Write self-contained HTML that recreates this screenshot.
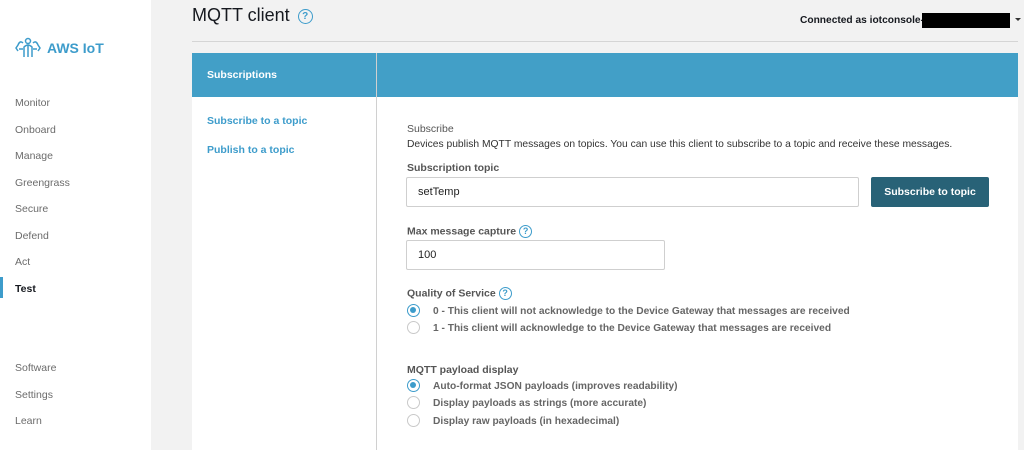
<!DOCTYPE html>
<html><head><meta charset="utf-8"><style>
*{margin:0;padding:0;box-sizing:border-box}
body{width:1024px;height:450px;overflow:hidden;background:#f2f2f2;font-family:"Liberation Sans",Arial,sans-serif;position:relative;color:#16191f}
.side{position:absolute;left:0;top:0;width:151px;height:450px;background:#fff}
.logo{position:absolute;left:15px;top:37px;display:flex;align-items:center;color:#3d9ccb;font-weight:bold;font-size:14px}
.nav{position:absolute;left:15px;font-size:10.5px;color:#6b6b6b}
.a{position:absolute}
.help{display:inline-block;width:13px;height:13px;border:1.3px solid #3d9ccb;border-radius:50%;color:#3d9ccb;font-size:9px;text-align:center;line-height:11px;font-weight:bold;vertical-align:middle}
.lbl{position:absolute;left:407px;font-size:10.5px;color:#555;font-weight:bold}
.inp{position:absolute;background:#fff;border:1px solid #cfcfcf;border-radius:2px;font-size:11px;padding-left:11px;line-height:28px;color:#222}
.r{position:absolute;left:407px;width:13px;height:13px;border:1px solid #c9c9c9;border-radius:50%;background:#fff}
.r.on{border:1.5px solid #3d9ccb}
.r.on:after{content:"";position:absolute;left:2px;top:2px;width:6px;height:6px;border-radius:50%;background:#3d9ccb}
.rt{position:absolute;left:433px;font-size:10.2px;color:#666;font-weight:bold}
</style></head><body>
<div class="side">
 <div class="logo"><svg width="26" height="22" viewBox="0 0 26 22" fill="none" stroke="#3d9ccb" stroke-width="1.5"><circle cx="13" cy="4" r="2.5"/><path d="M8 6 Q5 3 3 8 L1 11 L3 14 M18 6 Q21 3 23 8 L25 11 L23 14 M9 20 V10 Q13 6 17 10 V20 M13 8 V20 M4 12 H8 M18 12 H22"/></svg><span style="margin-left:6px">AWS IoT</span></div>
 <div class="nav" style="top:97px">Monitor</div>
 <div class="nav" style="top:124px">Onboard</div>
 <div class="nav" style="top:150px">Manage</div>
 <div class="nav" style="top:177px">Greengrass</div>
 <div class="nav" style="top:203px">Secure</div>
 <div class="nav" style="top:230px">Defend</div>
 <div class="nav" style="top:256px">Act</div>
 <div class="a" style="left:0;top:277px;width:3px;height:21px;background:#3d9ccb"></div>
 <div class="nav" style="top:283px;color:#16191f;font-weight:bold">Test</div>
 <div class="nav" style="top:362px">Software</div>
 <div class="nav" style="top:389px">Settings</div>
 <div class="nav" style="top:415px">Learn</div>
</div>
<div class="a" style="left:192px;top:5px;font-size:18px;color:#16191f">MQTT client <span class="help" style="width:15px;height:15px;line-height:13px;font-size:10px;margin-left:3px">?</span></div>
<div class="a" style="left:800px;top:15px;font-size:10.2px;font-weight:bold;white-space:nowrap">Connected as iotconsole-</div>
<div class="a" style="left:922px;top:13px;width:88px;height:15px;background:#000"></div>
<div class="a" style="left:1015px;top:18px;border-left:3px solid transparent;border-right:3px solid transparent;border-top:3px solid #333"></div>
<div class="a" style="left:192px;top:41px;width:826px;height:1px;background:#d5d5d5"></div>
<div class="a" style="left:192px;top:53px;width:826px;height:397px;background:#fff"></div>
<div class="a" style="left:192px;top:53px;width:826px;height:44px;background:#429fc7"></div>
<div class="a" style="left:376px;top:53px;width:1px;height:397px;background:#d0d0d0"></div>
<div class="a" style="left:207px;top:69px;font-size:10.5px;font-weight:bold;color:#fff">Subscriptions</div>
<div class="a" style="left:207px;top:115px;font-size:10.5px;font-weight:bold;color:#3d9ccb">Subscribe to a topic</div>
<div class="a" style="left:207px;top:144px;font-size:10.5px;font-weight:bold;color:#3d9ccb">Publish to a topic</div>
<div class="lbl" style="top:123px;font-weight:normal">Subscribe</div>
<div class="a" style="left:407px;top:139px;font-size:10.3px;color:#333;white-space:nowrap">Devices publish MQTT messages on topics. You can use this client to subscribe to a topic and receive these messages.</div>
<div class="lbl" style="top:162px">Subscription topic</div>
<div class="inp" style="left:406px;top:177px;width:453px;height:30px">setTemp</div>
<div class="a" style="left:871px;top:177px;width:118px;height:30px;background:#286277;color:#fff;font-size:10.5px;font-weight:bold;text-align:center;line-height:30px;border-radius:2px">Subscribe to topic</div>
<div class="lbl" style="top:225px">Max message capture <span class="help">?</span></div>
<div class="inp" style="left:406px;top:240px;width:259px;height:30px">100</div>
<div class="lbl" style="top:287px">Quality of Service <span class="help">?</span></div>
<div class="r on" style="top:304px"></div><div class="rt" style="top:306px">0 - This client will not acknowledge to the Device Gateway that messages are received</div>
<div class="r" style="top:321px"></div><div class="rt" style="top:323px">1 - This client will acknowledge to the Device Gateway that messages are received</div>
<div class="lbl" style="top:364px">MQTT payload display</div>
<div class="r on" style="top:379px"></div><div class="rt" style="top:381px">Auto-format JSON payloads (improves readability)</div>
<div class="r" style="top:396px"></div><div class="rt" style="top:398px">Display payloads as strings (more accurate)</div>
<div class="r" style="top:414px"></div><div class="rt" style="top:416px">Display raw payloads (in hexadecimal)</div>
</body></html>
